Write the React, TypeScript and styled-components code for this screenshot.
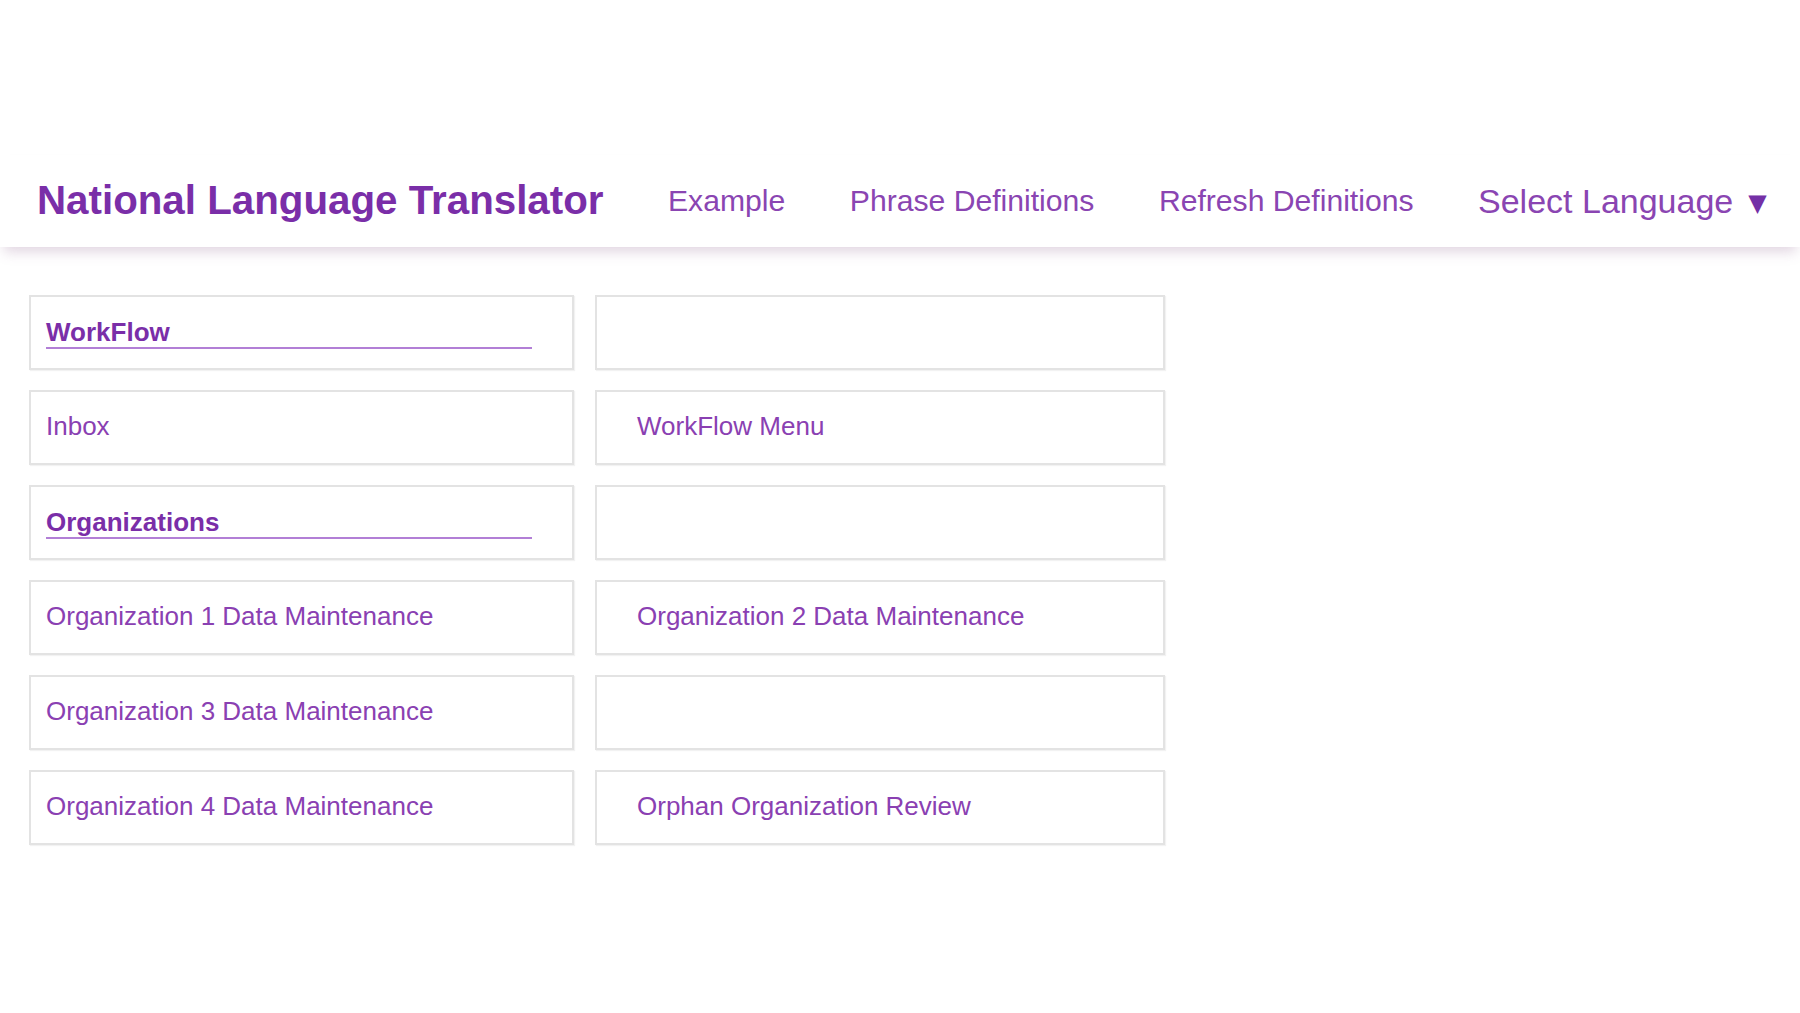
import React from "react";
import styled, { createGlobalStyle } from "styled-components";

const GlobalStyle = createGlobalStyle`
  html, body {
    margin: 0;
    padding: 0;
    background: #ffffff;
    font-family: "Liberation Sans", Arial, sans-serif;
  }
`;

const Page = styled.div`
  width: 1800px;
  min-height: 1013px;
  padding-top: 155px;
  box-sizing: border-box;
  background: #ffffff;
`;

const Header = styled.header`
  height: 92px;
  display: flex;
  align-items: center;
  gap: 64.5px;
  padding-left: 37px;
  background: #ffffff;
  box-shadow: 0 9px 12px -4px rgba(140, 90, 140, 0.25);
  position: relative;
  z-index: 1;
`;

const Title = styled.h1`
  margin: 0;
  font-size: 40.3px;
  font-weight: 700;
  color: #7a2ea8;
  white-space: nowrap;
`;

const NavLink = styled.a<{ $big?: boolean }>`
  font-size: ${(p) => (p.$big ? "34px" : "30.15px")};
  color: #8a45b2;
  text-decoration: none;
  white-space: nowrap;
  display: flex;
  align-items: center;
  gap: 15px;
`;

const Caret = styled.span`
  font-family: "DejaVu Sans", sans-serif;
  font-size: 24px;
  color: #7430a6;
  margin-top: 4px;
`;

const Grid = styled.main`
  display: grid;
  grid-template-columns: 545px 570px;
  grid-auto-rows: 75px;
  column-gap: 21px;
  row-gap: 20px;
  padding: 48px 0 0 29px;
`;

const Cell = styled.div<{ $right?: boolean }>`
  box-sizing: border-box;
  border: 2px solid #e3e3e3;
  box-shadow: 1px 1px 1px rgba(0, 0, 0, 0.05);
  background: #ffffff;
  display: flex;
  align-items: center;
  padding: 0 40px 0 ${(p) => (p.$right ? "40px" : "15px")};
`;

const ItemLink = styled.a`
  font-size: 26px;
  color: #8a40b2;
  text-decoration: none;
  white-space: nowrap;
  padding-bottom: 3px;
`;

const SectionTitle = styled.div`
  flex: 1;
  font-size: 26px;
  font-weight: 700;
  color: #7a2ea8;
  line-height: 30px;
  border-bottom: 2px solid #b27fd6;
`;

type CellData = { kind: "section" | "link" | "empty"; text?: string };

const rows: [CellData, CellData][] = [
  [{ kind: "section", text: "WorkFlow" }, { kind: "empty" }],
  [{ kind: "link", text: "Inbox" }, { kind: "link", text: "WorkFlow Menu" }],
  [{ kind: "section", text: "Organizations" }, { kind: "empty" }],
  [
    { kind: "link", text: "Organization 1 Data Maintenance" },
    { kind: "link", text: "Organization 2 Data Maintenance" },
  ],
  [{ kind: "link", text: "Organization 3 Data Maintenance" }, { kind: "empty" }],
  [
    { kind: "link", text: "Organization 4 Data Maintenance" },
    { kind: "link", text: "Orphan Organization Review" },
  ],
];

const renderCell = (c: CellData, right: boolean, key: string) => (
  <Cell key={key} $right={right}>
    {c.kind === "section" && <SectionTitle>{c.text}</SectionTitle>}
    {c.kind === "link" && <ItemLink href="#">{c.text}</ItemLink>}
  </Cell>
);

export default function App() {
  return (
    <>
      <GlobalStyle />
      <Page>
        <Header>
          <Title>National Language Translator</Title>
          <NavLink href="#">Example</NavLink>
          <NavLink href="#">Phrase Definitions</NavLink>
          <NavLink href="#">Refresh Definitions</NavLink>
          <NavLink href="#" $big>
            Select Language <Caret>▼</Caret>
          </NavLink>
        </Header>
        <Grid>
          {rows.map((r, i) => [
            renderCell(r[0], false, `l${i}`),
            renderCell(r[1], true, `r${i}`),
          ])}
        </Grid>
      </Page>
    </>
  );
}
